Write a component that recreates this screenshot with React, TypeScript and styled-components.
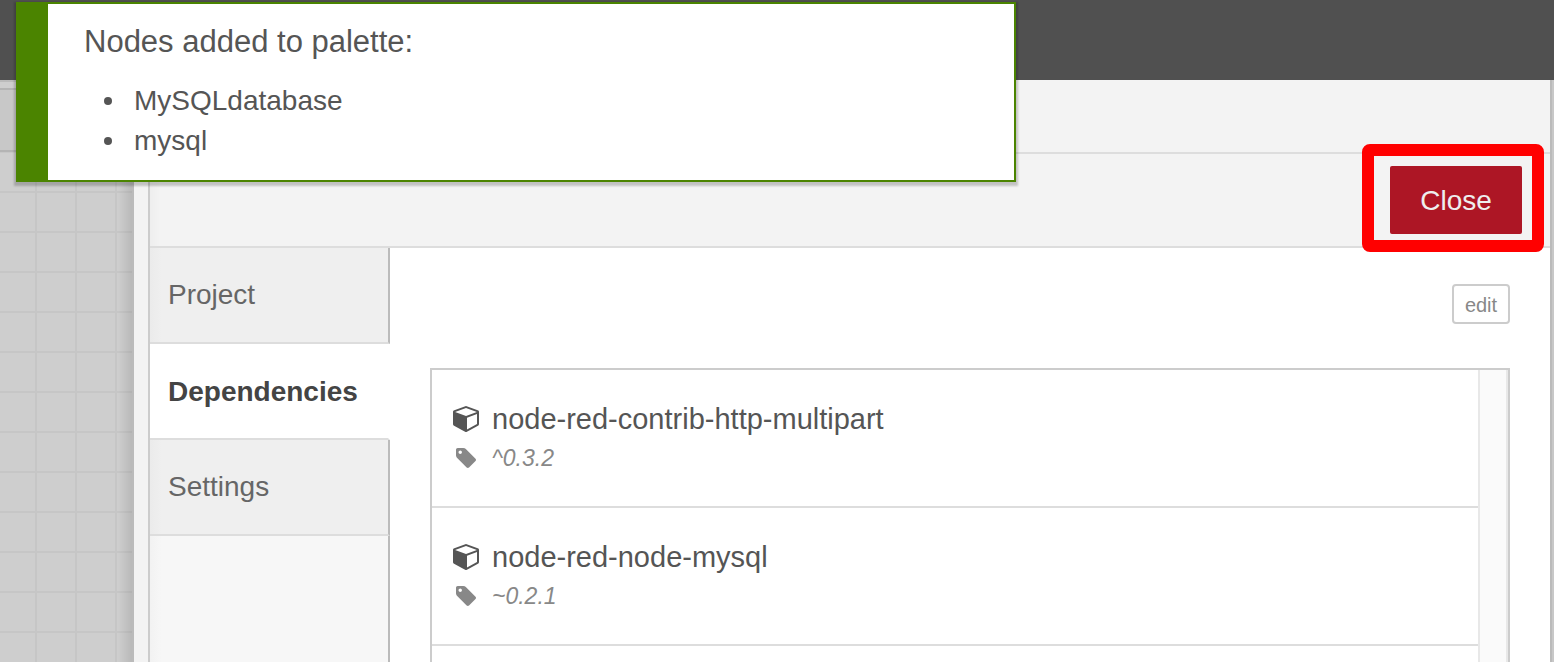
import React from 'react';
import styled, { createGlobalStyle } from 'styled-components';

const GlobalStyle = createGlobalStyle`
  *, *::before, *::after { box-sizing: border-box; }
  body {
    margin: 0;
    font-family: "Liberation Sans", Arial, sans-serif;
    font-size: 28px;
    line-height: 40px;
    color: #555;
  }
  button { font-family: inherit; }
`;

const Page = styled.div`
  position: relative;
  display: flex;
  flex-direction: column;
  height: 100vh;
  overflow: hidden;
`;

const TopBar = styled.header`
  flex: none;
  height: 80px;
  background: #505050;
`;

const Main = styled.div`
  flex: 1;
  min-height: 0;
  display: flex;
`;

const Workspace = styled.div`
  flex: none;
  width: 134px;
  display: flex;
  flex-direction: column;
  border-top: 2px solid #bbb;
  border-right: 2px solid #bbb;
  background: #cecece;
`;

const FlowTabs = styled.div`
  flex: none;
  height: 70px;
  padding-top: 6px;
  border-bottom: 2px solid #b4b4b4;

  &::before {
    content: "";
    display: block;
    height: 62px;
    border-top: 2px solid #b4b4b4;
    background: #c8c8c8;
  }
`;

const Grid = styled.div`
  flex: 1;
  background-image:
    linear-gradient(to left, rgba(0, 0, 0, 0.1), transparent 14px),
    linear-gradient(to right, #c6c6c6 2px, transparent 2px),
    linear-gradient(to bottom, #c6c6c6 2px, transparent 2px);
  background-size: 100% 100%, 40px 40px, 40px 40px;
  background-position: 0 0, 35px 39px, 35px 39px;
`;

const Tray = styled.section`
  flex: 1;
  min-width: 0;
  display: flex;
  border-right: 2px solid #bbb;
`;

const ResizeHandle = styled.div`
  flex: none;
  width: 16px;
  background: #f3f3f3;
  border-right: 2px solid #ccc;
`;

const TrayContent = styled.div`
  flex: 1;
  min-width: 0;
  display: flex;
  flex-direction: column;
  background: #fff;
`;

const TrayHeader = styled.div`
  flex: none;
  height: 74px;
  background: #f3f3f3;
  border-bottom: 2px solid #ddd;
`;

const TrayToolbar = styled.div`
  flex: none;
  display: flex;
  justify-content: flex-end;
  padding: 12px 28px;
  background: linear-gradient(to right, #eee, #f3f3f3 10px);
  border-bottom: 2px solid #ddd;
`;

const CloseWrap = styled.div`
  position: relative;
  display: flex;
`;

const CloseButton = styled.button`
  width: 132px;
  height: 68px;
  padding: 2px 0 0;
  border: 0;
  border-radius: 2px;
  background: #ad1625;
  color: #eee;
  font-size: 28px;
  line-height: 40px;
`;

const Highlight = styled.span`
  position: absolute;
  inset: -22px -22px -18px -28px;
  border: 12px solid #f00;
  border-radius: 8px;
  pointer-events: none;
`;

const TrayBody = styled.div`
  flex: 1;
  min-height: 0;
  display: flex;
`;

const SideTabs = styled.nav`
  flex: none;
  width: 240px;
  display: flex;
  flex-direction: column;

  &::after {
    content: "";
    flex: 1;
    border-right: 2px solid #bbb;
    background: linear-gradient(to right, #f2f2f2, #f7f7f7 12px);
  }
`;

const SideTab = styled.button<{ $active?: boolean }>`
  flex: none;
  height: 96px;
  padding: ${(p) => (p.$active ? '2px 18px 0' : '0 18px')};
  border: 0;
  border-right: 2px solid ${(p) => (p.$active ? '#fff' : '#bbb')};
  border-bottom: 2px solid #ddd;
  background: ${(p) => (p.$active ? '#fff' : 'linear-gradient(to right, #ebebeb, #efefef 12px)')};
  color: ${(p) => (p.$active ? '#444' : '#666')};
  font-size: 28px;
  font-weight: ${(p) => (p.$active ? 'bold' : 'normal')};
  line-height: 40px;
  text-align: left;
`;

const Panel = styled.main`
  flex: 1;
  min-width: 0;
  display: flex;
  flex-direction: column;
  align-items: flex-end;
  gap: 44px;
  padding: 36px 40px 0;
`;

const EditButton = styled.button`
  flex: none;
  width: 58px;
  height: 40px;
  padding: 2px 0 0;
  border: 2px solid #ccc;
  border-radius: 4px;
  background: #fff;
  color: #888;
  font-size: 20px;
  line-height: 34px;
`;

const ListBox = styled.div`
  flex: 1;
  min-height: 0;
  width: 100%;
  display: flex;
  overflow: hidden;
  border: 2px solid #ccc;
  border-bottom: 0;
`;

const List = styled.ul`
  flex: 1;
  margin: 0;
  padding: 0;
  list-style: none;
`;

const ScrollTrack = styled.div`
  flex: none;
  width: 30px;
  border: solid #e8e8e8;
  border-width: 0 2px;
  background: #fafafa;
`;

const Row = styled.li`
  height: 138px;
  padding: 29px 20px 0;
  border-bottom: 2px solid #ddd;
`;

const Line = styled.div`
  display: flex;
  align-items: center;
  gap: 12px;
  height: 40px;
  font-size: 29px;
`;

const VersionLine = styled(Line)`
  height: 38px;
  color: #888;
  font-size: 23px;
  font-style: italic;
`;

const IconSlot = styled.span`
  flex: none;
  width: 28px;
  display: flex;
  justify-content: center;
`;

const Notification = styled.div`
  position: absolute;
  top: 2px;
  left: 16px;
  width: 1000px;
  max-width: calc(100% - 32px);
  height: 180px;
  padding: 18px 36px;
  border: 2px solid #4b8400;
  border-left-width: 32px;
  background: #fff;
  box-shadow: 0 2px 2px 2px rgba(0, 0, 0, 0.2);
`;

const NoticeTitle = styled.p`
  margin: 0 0 19px;
  font-size: 31px;
`;

const NoticeList = styled.ul`
  margin: 0;
  padding: 0 0 0 20px;
  list-style: none;
`;

const NoticeItem = styled.li`
  display: flex;
  align-items: center;
  gap: 22px;

  &::before {
    content: "";
    width: 8px;
    height: 8px;
    border-radius: 50%;
    background: currentColor;
  }
`;

const Sidebar = styled.aside`
  flex: none;
  width: 2px;
  background: #c8c8c8;
`;

const CubeIcon = () => (
  <svg width="26" height="26" viewBox="0 128 1664 1664" fill="currentColor" aria-hidden="true">
    <path d="M896 1629l640-349v-636l-640 233v752zm-64-865l698-254-698-254-698 254zm832-252v768q0 35-18 65t-49 47l-704 384q-28 16-61 16t-61-16l-704-384q-31-17-49-47t-18-65v-768q0-40 23-73t61-47l704-256q22-8 44-8t44 8l704 256q38 14 61 47t23 73z" />
  </svg>
);

const TagIcon = () => (
  <svg width="20" height="20" viewBox="0 128 1515 1515" fill="currentColor" aria-hidden="true">
    <path d="M448 448q0-53-37.500-90.500t-90.500-37.500-90.500 37.500-37.500 90.500 37.500 90.500 90.500 37.500 90.500-37.500 37.500-90.500zm1067 576q0 53-37 90l-491 492q-39 37-91 37-53 0-90-37l-715-716q-38-37-64.500-101t-26.500-117v-416q0-52 38-90t90-38h416q53 0 117 26.500t102 64.500l715 714q37 39 37 91z" />
  </svg>
);

const modules = [
  { name: 'node-red-contrib-http-multipart', version: '^0.3.2' },
  { name: 'node-red-node-mysql', version: '~0.2.1' },
];

export default function App() {
  return (
    <Page>
      <GlobalStyle />
      <TopBar />
      <Main>
        <Workspace>
          <FlowTabs />
          <Grid />
        </Workspace>
        <Tray>
          <ResizeHandle />
          <TrayContent>
            <TrayHeader />
            <TrayToolbar>
              <CloseWrap>
                <CloseButton type="button">Close</CloseButton>
                <Highlight />
              </CloseWrap>
            </TrayToolbar>
            <TrayBody>
              <SideTabs>
                <SideTab type="button">Project</SideTab>
                <SideTab type="button" $active>Dependencies</SideTab>
                <SideTab type="button">Settings</SideTab>
              </SideTabs>
              <Panel>
                <EditButton type="button">edit</EditButton>
                <ListBox>
                  <List>
                    {modules.map((m) => (
                      <Row key={m.name}>
                        <Line>
                          <IconSlot><CubeIcon /></IconSlot>
                          {m.name}
                        </Line>
                        <VersionLine>
                          <IconSlot><TagIcon /></IconSlot>
                          {m.version}
                        </VersionLine>
                      </Row>
                    ))}
                  </List>
                  <ScrollTrack />
                </ListBox>
              </Panel>
            </TrayBody>
          </TrayContent>
        </Tray>
        <Sidebar />
      </Main>
      <Notification role="status">
        <NoticeTitle>Nodes added to palette:</NoticeTitle>
        <NoticeList>
          <NoticeItem>MySQLdatabase</NoticeItem>
          <NoticeItem>mysql</NoticeItem>
        </NoticeList>
      </Notification>
    </Page>
  );
}
